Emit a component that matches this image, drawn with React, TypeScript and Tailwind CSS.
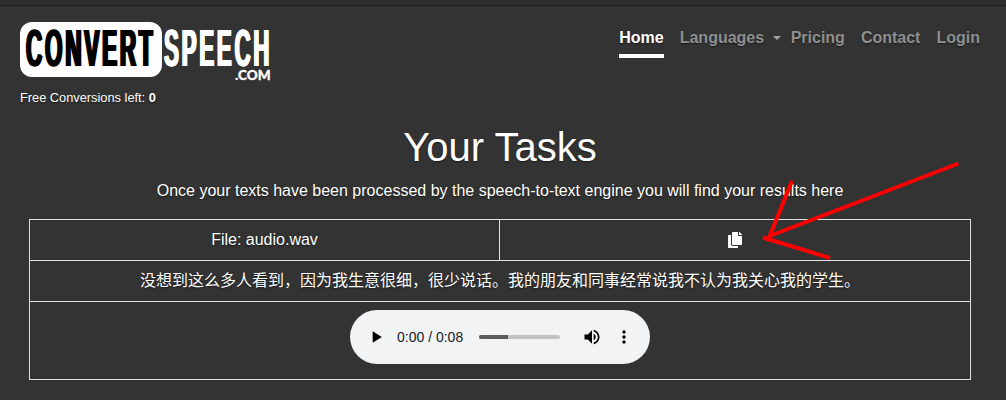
import React from "react";

function Logo() {
  return (
    <div className="flex h-[60px] w-[252px] flex-col" aria-label="ConvertSpeech.com">
      <div className="flex h-[54.5px] font-['Liberation_Sans',sans-serif] text-[51px] font-bold leading-[53px] whitespace-nowrap [text-shadow:none]">
        <div className="w-[141.5px] shrink-0 rounded-[12px] bg-white pl-[6px]">
          <span className="block w-[300px] origin-left scale-x-[0.44] tracking-[6.4px] text-black [text-shadow:2.5px_0_0_#000,-2.5px_0_0_#000]">CONVERT</span>
        </div>
        <div className="w-[108px] shrink-0 pl-[2.5px]">
          <span className="block w-[245px] origin-left scale-x-[0.44] tracking-[6px] text-white [text-shadow:1.8px_0_0_#fff,-1.8px_0_0_#fff]">SPEECH</span>
        </div>
      </div>
      <svg width="252" height="12" viewBox="0 0 252 12" className="-mt-[8px] block shrink-0 [text-shadow:none]" overflow="visible">
        <text x="215" y="11.2" textLength="35.5" lengthAdjust="spacingAndGlyphs" fill="#fff" stroke="#fff" strokeWidth="0.3" fontFamily="Lato, sans-serif" fontWeight="900" fontSize="13.5">.COM</text>
      </svg>
    </div>
  );
}

function CopyIcon() {
  return (
    <svg width="14" height="16" viewBox="0 0 448 512" fill="#fff" className="block">
      <path d="M320 448v40c0 13.255-10.745 24-24 24H24c-13.255 0-24-10.745-24-24V120c0-13.255 10.745-24 24-24h72v296c0 30.879 25.121 56 56 56h168zm0-344V0H152c-13.255 0-24 10.745-24 24v368c0 13.255 10.745 24 24 24h272c13.255 0 24-10.745 24-24V128H344c-13.2 0-24-10.8-24-24zm120.971-31.029L375.029 7.029A24 24 0 0 0 358.059 0H352v96h96v-6.059a24 24 0 0 0-7.029-16.97z" />
    </svg>
  );
}

function AudioPlayer() {
  return (
    <div className="flex h-[54px] w-[300px] items-center rounded-full bg-[#f1f3f4] text-left text-black [text-shadow:none]">
      <svg width="20" height="20" viewBox="0 0 24 24" className="ml-4 shrink-0"><path d="M8 5v14l11-7z" /></svg>
      <span className="ml-[11px] w-[82px] text-[14px] leading-5 whitespace-nowrap text-[#202124]">0:00 / 0:08</span>
      <div className="h-1 w-[81px] overflow-hidden rounded-full bg-[#c1c2c3]">
        <div className="h-1 w-[29px] bg-[#5a5b5c]" />
      </div>
      <svg width="20" height="20" viewBox="0 0 24 24" className="ml-[22px] shrink-0">
        <path d="M3 9v6h4l5 5V4L7 9H3zm13.5 3c0-1.77-1.02-3.29-2.5-4.03v8.05c1.48-.73 2.5-2.25 2.5-4.02zM14 3.23v2.06c2.89.86 5 3.54 5 6.71s-2.11 5.85-5 6.71v2.06c4.01-.91 7-4.49 7-8.77s-2.99-7.86-7-8.77z" />
      </svg>
      <svg width="20" height="20" viewBox="0 0 24 24" className="ml-3 shrink-0">
        <path d="M12 8c1.1 0 2-.9 2-2s-.9-2-2-2-2 .9-2 2 .9 2 2 2zm0 2c-1.1 0-2 .9-2 2s.9 2 2 2 2-.9 2-2-.9-2-2-2zm0 6c-1.1 0-2 .9-2 2s.9 2 2 2 2-.9 2-2-.9-2-2-2z" />
      </svg>
    </div>
  );
}

export default function App() {
  return (
    <div className="relative h-[400px] w-[1006px] overflow-hidden bg-[#333] font-['Liberation_Sans','Noto_Sans_CJK_SC',sans-serif] text-base text-white [text-shadow:0_0.8px_1.6px_rgba(0,0,0,0.5)]">
      <div className="h-[6px] border-b border-[#1c1c1c] bg-[#2d2d2d]" />
      <header className="flex h-[100px] justify-between pl-5 pr-[26px]">
        <div className="pt-4">
          <Logo />
          <p className="mt-[6px] text-[12.8px] leading-5">Free Conversions left: <b>0</b></p>
        </div>
        <nav className="flex items-start pt-5 font-bold leading-6 text-[#8f8f8f]">
          <a className="flex h-[32px] items-start border-b-4 border-white pb-[8px] text-white">Home</a>
          <a className="ml-4 flex items-start">
            Languages
            <span className="ml-[8.5px] mt-[10px] border-x-[4px] border-t-[4px] border-x-transparent border-t-[#a3a3a3]" />
          </a>
          <a className="ml-[10px]">Pricing</a>
          <a className="ml-4">Contact</a>
          <a className="ml-4">Login</a>
        </nav>
      </header>
      <main className="flex flex-col pl-[29px] pr-[35px] text-center">
        <h1 className="mt-[17px] text-[40px] leading-[48px]">Your Tasks</h1>
        <p className="mt-2 leading-6">Once your texts have been processed by the speech-to-text engine you will find your results here</p>
        <div className="mt-4 border border-[#dee2e6]">
          <div className="grid h-[41px] grid-cols-2 border-b border-[#dee2e6]">
            <div className="flex items-center justify-center border-r border-[#dee2e6]">File: audio.wav</div>
            <div className="flex items-center justify-center"><CopyIcon /></div>
          </div>
          <div className="flex h-[41px] items-center justify-center border-b border-[#dee2e6]">
            没想到这么多人看到，因为我生意很细，很少说话。我的朋友和同事经常说我不认为我关心我的学生。
          </div>
          <div className="flex h-[77px] justify-center pt-2"><AudioPlayer /></div>
        </div>
      </main>
      <svg width="210" height="105" viewBox="755 158 210 105" className="pointer-events-none absolute left-[755px] top-[158px]" fill="none" stroke="#f00" strokeWidth="4">
        <path d="M958.5 163.5L771 235.5M792 181L767.5 241.5M763 237.5L830 258" />
      </svg>
    </div>
  );
}
